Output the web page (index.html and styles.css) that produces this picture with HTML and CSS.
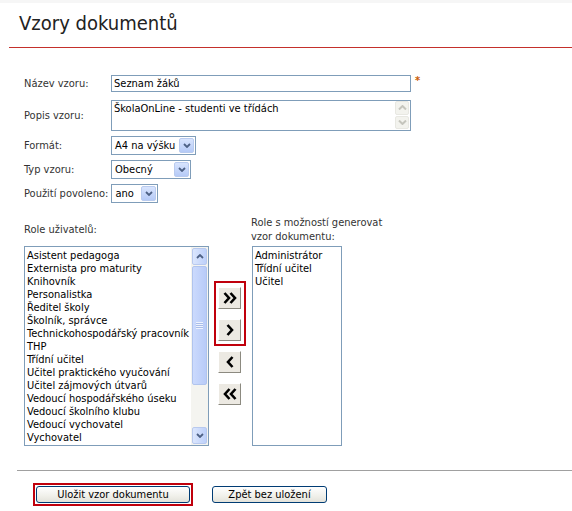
FILE: index.html
```html
<!DOCTYPE html>
<html lang="cs">
<head>
<meta charset="utf-8">
<title>Vzory dokumentů</title>
<link rel="stylesheet" href="styles.css">
</head>
<body>
<div class="topbar"></div>
<div class="header"><h1>Vzory dokumentů</h1></div>
<div class="content">
  <div class="form">
    <div class="row r-name">
      <span class="label">Název vzoru:</span>
      <div class="input">Seznam žáků</div>
      <span class="req">*</span>
    </div>
    <div class="row r-desc">
      <span class="label">Popis vzoru:</span>
      <div class="textarea">
        <span class="ta-text">ŠkolaOnLine - studenti ve třídách</span>
        <div class="ta-scroll">
          <span class="ta-btn"><svg width="9" height="5" viewBox="0 0 9 5"><polyline points="1,4.5 4.5,1 8,4.5" fill="none" stroke="#c5c5bd" stroke-width="2"/></svg></span>
          <span class="ta-btn"><svg width="9" height="5" viewBox="0 0 9 5"><polyline points="1,0.5 4.5,4 8,0.5" fill="none" stroke="#c5c5bd" stroke-width="2"/></svg></span>
        </div>
      </div>
    </div>
    <div class="row r-sel">
      <span class="label">Formát:</span>
      <div class="select w-format"><span class="sel-text">A4 na výšku</span><span class="sel-btn"><svg width="8" height="5" viewBox="0 0 8 5"><polyline points="1,1 4,4 7,1" fill="none" stroke="#4d6185" stroke-width="1.8"/></svg></span></div>
    </div>
    <div class="row r-sel">
      <span class="label">Typ vzoru:</span>
      <div class="select w-typ"><span class="sel-text">Obecný</span><span class="sel-btn"><svg width="8" height="5" viewBox="0 0 8 5"><polyline points="1,1 4,4 7,1" fill="none" stroke="#4d6185" stroke-width="1.8"/></svg></span></div>
    </div>
    <div class="row r-sel">
      <span class="label label-auto">Použití povoleno:</span>
      <div class="select w-ano"><span class="sel-text">ano</span><span class="sel-btn"><svg width="8" height="5" viewBox="0 0 8 5"><polyline points="1,1 4,4 7,1" fill="none" stroke="#4d6185" stroke-width="1.8"/></svg></span></div>
    </div>
  </div>

  <div class="roles">
    <div class="role-label">Role uživatelů:</div>
    <div></div>
    <div class="role-label">Role s možností generovat<br>vzor dokumentu:</div>

    <div class="listbox list-left">
      <ul class="items">
        <li>Asistent pedagoga</li>
        <li>Externista pro maturity</li>
        <li>Knihovník</li>
        <li>Personalistka</li>
        <li>Ředitel školy</li>
        <li>Školník, správce</li>
        <li>Technickohospodářský pracovník</li>
        <li>THP</li>
        <li>Třídní učitel</li>
        <li>Učitel praktického vyučování</li>
        <li>Učitel zájmových útvarů</li>
        <li>Vedoucí hospodářského úseku</li>
        <li>Vedoucí školního klubu</li>
        <li>Vedoucí vychovatel</li>
        <li>Vychovatel</li>
      </ul>
      <div class="scrollbar">
        <span class="sb-btn"><svg width="8" height="5" viewBox="0 0 8 5"><polyline points="1,4 4,1 7,4" fill="none" stroke="#4d6185" stroke-width="1.8"/></svg></span>
        <span class="sb-thumb"><span class="grip"></span></span>
        <span class="sb-track"></span>
        <span class="sb-btn"><svg width="8" height="5" viewBox="0 0 8 5"><polyline points="1,1 4,4 7,1" fill="none" stroke="#4d6185" stroke-width="1.8"/></svg></span>
      </div>
    </div>

    <div class="movers">
      <div class="hl">
        <span class="mv-btn"><svg width="14" height="12" viewBox="0 0 14 12"><polyline points="1.5,1 6,6 1.5,11" fill="none" stroke="#000" stroke-width="2.6"/><polyline points="7.5,1 12,6 7.5,11" fill="none" stroke="#000" stroke-width="2.6"/></svg></span>
        <span class="mv-btn"><svg width="8" height="12" viewBox="0 0 8 12"><polyline points="1.5,1 6,6 1.5,11" fill="none" stroke="#000" stroke-width="2.6"/></svg></span>
      </div>
      <span class="mv-btn mv-3"><svg width="8" height="12" viewBox="0 0 8 12"><polyline points="6.5,1 2,6 6.5,11" fill="none" stroke="#000" stroke-width="2.6"/></svg></span>
      <span class="mv-btn mv-4"><svg width="14" height="12" viewBox="0 0 14 12"><polyline points="6.5,1 2,6 6.5,11" fill="none" stroke="#000" stroke-width="2.6"/><polyline points="12.5,1 8,6 12.5,11" fill="none" stroke="#000" stroke-width="2.6"/></svg></span>
    </div>

    <div class="listbox list-right">
      <ul class="items">
        <li>Administrátor</li>
        <li>Třídní učitel</li>
        <li>Učitel</li>
      </ul>
    </div>
  </div>

  <div class="footer">
    <div class="btn-hl"><span class="btn btn-save">Uložit vzor dokumentu</span></div>
    <span class="btn btn-back">Zpět bez uložení</span>
  </div>
</div>
</body>
</html>
```
FILE: styles.css
```css
html, body {
  margin: 0;
  padding: 0;
  background: #fff;
}
body {
  font-family: "DejaVu Sans Condensed", "DejaVu Sans", sans-serif;
  font-stretch: condensed;
  font-size: 11px;
  color: #000;
}
.topbar {
  height: 3px;
  background: #f6f6f6;
}
.header {
  margin-left: 9px;
  padding: 8px 0 12px 10px;
  border-bottom: 1px solid #c4302b;
}
.header h1 {
  margin: 0;
  font-weight: normal;
  font-size: 20px;
  line-height: 24px;
  color: #222;
}
.content {
  padding-left: 17px;
}
.form {
  padding-left: 7px;
  padding-top: 27px;
}
.row {
  display: flex;
  align-items: center;
}
.label {
  width: 87px;
  flex: none;
  color: #333;
}
.label-auto {
  width: auto;
  margin-right: 3px;
}
.input {
  box-sizing: border-box;
  width: 300px;
  height: 17px;
  border: 1px solid #7f9db9;
  padding: 0 2px;
  line-height: 15px;
}
.req {
  margin-left: 4px;
  align-self: flex-start;
  color: #c85a00;
  font-weight: bold;
  font-size: 11px;
  line-height: 11px;
}
.r-desc {
  margin-top: 8px;
}
.textarea {
  box-sizing: border-box;
  width: 300px;
  height: 31px;
  border: 1px solid #7f9db9;
  display: flex;
  justify-content: space-between;
}
.ta-text {
  padding: 1px 2px;
  line-height: 13px;
}
.ta-scroll {
  display: flex;
  flex-direction: column;
  width: 17px;
}
.ta-btn {
  box-sizing: border-box;
  height: 14px;
  margin: 0 1px 1px 2px;
  border: 1px solid #e8e8e2;
  border-radius: 2px;
  background: #f3f3ee;
  display: flex;
  align-items: center;
  justify-content: center;
}
.r-sel {
  margin-top: 5px;
}
.select {
  box-sizing: border-box;
  height: 19px;
  border: 1px solid #7f9db9;
  display: flex;
  align-items: center;
  justify-content: space-between;
  padding: 0 1px 0 3px;
}
.w-format { width: 85px; }
.w-typ { width: 80px; }
.w-ano { width: 47px; }
.sel-btn {
  box-sizing: border-box;
  width: 15px;
  height: 15px;
  border: 1px solid #b9cbef;
  border-radius: 2px;
  background: linear-gradient(#d8e4fd, #b5caf7);
  display: flex;
  align-items: center;
  justify-content: center;
}

.roles {
  display: grid;
  grid-template-columns: 185px 32px 91px;
  column-gap: 5px;
  margin-top: 13px;
  padding-left: 7px;
}
.role-label {
  color: #333;
  align-self: center;
  line-height: 14px;
  white-space: nowrap;
}
.listbox {
  box-sizing: border-box;
  height: 200px;
  margin-top: 2px;
  border: 1px solid #7f9db9;
  display: flex;
}
.list-right {
  margin-left: 1px;
}
.items {
  list-style: none;
  margin: 0;
  padding: 2px 0 0 2px;
  flex: 1;
  line-height: 13px;
  white-space: nowrap;
  overflow: hidden;
}
.scrollbar {
  width: 17px;
  flex: none;
  display: flex;
  flex-direction: column;
  background: #f4f4f0;
}
.sb-btn {
  box-sizing: border-box;
  height: 17px;
  margin: 1px;
  border: 1px solid #b8c9ee;
  border-radius: 2px;
  background: linear-gradient(90deg, #dbe6fd, #bdd0fa);
  display: flex;
  align-items: center;
  justify-content: center;
}
.sb-thumb {
  box-sizing: border-box;
  height: 119px;
  margin: 0 1px;
  border: 1px solid #b0c4ee;
  border-radius: 2px;
  background: linear-gradient(90deg, #cbdafd, #b8cbf8);
  display: flex;
  align-items: center;
  justify-content: center;
}
.grip {
  width: 7px;
  height: 7px;
  background: repeating-linear-gradient(#eef3fe 0 1px, #a9bde9 1px 2px);
}
.sb-track {
  flex: 1;
}

.movers {
  display: flex;
  flex-direction: column;
  align-items: flex-start;
  padding-top: 37px;
}
.hl {
  box-sizing: border-box;
  width: 32px;
  border: 2px solid #c0000c;
  padding: 4px 3px 3px 2px;
  display: flex;
  flex-direction: column;
  gap: 10px;
}
.mv-btn {
  box-sizing: border-box;
  width: 23px;
  height: 22px;
  background: #ece9e2;
  border-top: 1px solid #fff;
  border-left: 1px solid #fff;
  border-right: 1px solid #8c8a80;
  border-bottom: 1px solid #8c8a80;
  display: flex;
  align-items: center;
  justify-content: center;
}
.mv-3 {
  margin: 5px 0 0 4px;
}
.mv-4 {
  margin: 10px 0 0 4px;
}

.footer {
  margin-top: 24px;
  border-top: 1px solid #a0a0a0;
  padding: 12px 0 0 16px;
  display: flex;
  align-items: center;
  gap: 19px;
}
.btn-hl {
  border: 2px solid #c0000c;
  padding: 1px;
}
.btn {
  box-sizing: border-box;
  height: 17px;
  display: flex;
  align-items: center;
  justify-content: center;
  border: 1px solid #003c74;
  border-radius: 3px;
  background: linear-gradient(#fff, #f0f0ea 60%, #e3e2da);
  color: #000;
}
.btn-save {
  width: 154px;
}
.btn-back {
  width: 115px;
}
```
